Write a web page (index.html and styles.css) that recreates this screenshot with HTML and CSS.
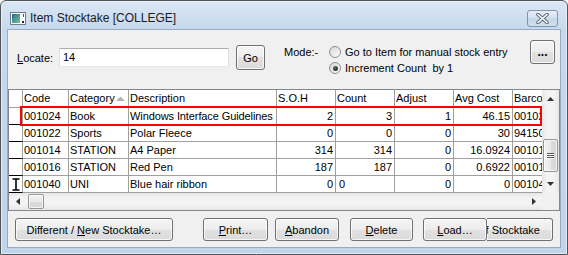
FILE: index.html
```html
<!DOCTYPE html>
<html lang="en">
<head>
    <meta charset="UTF-8">
    <title>Item Stocktake</title>
    <link rel="stylesheet" href="styles.css">
</head>
<body>
<div class="window">
    <div class="titlebar">
        <svg class="app-icon" width="16" height="13" viewBox="0 0 16 13">
            <defs>
                <linearGradient id="ig" x1="0" y1="0" x2="1" y2="1">
                    <stop offset="0" stop-color="#2a6f8c"/>
                    <stop offset="1" stop-color="#79c39a"/>
                </linearGradient>
            </defs>
            <rect x="0.5" y="0.5" width="15" height="12" fill="#fafafa" stroke="#6f7f90"/>
            <rect x="2" y="2" width="8" height="9" fill="url(#ig)"/>
            <rect x="12" y="9" width="2" height="2" fill="#222"/>
            <rect x="13" y="2" width="1" height="3" fill="#555"/>
        </svg>
        <span class="title">Item Stocktake [COLLEGE]</span>
        <div class="close-btn">
            <svg width="13" height="11" viewBox="0 0 13 11">
                <path d="M2 1.5L11 9.5M11 1.5L2 9.5" stroke="#5b6b80" stroke-width="3.6" stroke-linecap="round"/>
                <path d="M2 1.5L11 9.5M11 1.5L2 9.5" stroke="#fff" stroke-width="1.6" stroke-linecap="round"/>
            </svg>
        </div>
    </div>

    <div class="client">
        <div class="top">
            <div class="locate">
                <label><u>L</u>ocate:</label>
                <div class="textbox">14</div>
                <button class="btn go">Go</button>
            </div>
            <div class="mode">
                <span class="mode-label">Mode:-</span>
                <div class="options">
                    <div class="opt"><span class="radio"></span>Go to Item for manual stock entry</div>
                    <div class="opt"><span class="radio checked"></span>Increment Count&nbsp; by 1</div>
                </div>
            </div>
            <button class="btn more">...</button>
        </div>

        <div class="grid">
            <div class="grid-view">
                <table>
                    <colgroup>
                        <col class="c-ind"><col class="c-code"><col class="c-cat"><col class="c-desc">
                        <col class="c-num"><col class="c-num"><col class="c-num"><col class="c-num"><col class="c-bar">
                    </colgroup>
                    <thead>
                        <tr>
                            <th class="ind"></th>
                            <th>Code</th>
                            <th>Category<svg class="sort" width="9" height="5" viewBox="0 0 9 5"><path d="M0 5L4.5 0.5L9 5Z" fill="#b3b3b3"/></svg></th>
                            <th>Description</th>
                            <th>S.O.H</th>
                            <th>Count</th>
                            <th>Adjust</th>
                            <th>Avg Cost</th>
                            <th>Barcode</th>
                        </tr>
                    </thead>
                    <tbody>
                        <tr>
                            <td class="ind"></td>
                            <td>001024</td><td>Book</td><td class="desc">Windows Interface Guidelines</td>
                            <td class="num">2</td><td class="num">3</td><td class="num">1</td><td class="num">46.15</td><td>001024</td>
                        </tr>
                        <tr>
                            <td class="ind"></td>
                            <td>001022</td><td>Sports</td><td>Polar Fleece</td>
                            <td class="num">0</td><td class="num">0</td><td class="num">0</td><td class="num">30</td><td>9415007000123</td>
                        </tr>
                        <tr>
                            <td class="ind"></td>
                            <td>001014</td><td>STATION</td><td>A4 Paper</td>
                            <td class="num">314</td><td class="num">314</td><td class="num">0</td><td class="num">16.0924</td><td>001014</td>
                        </tr>
                        <tr>
                            <td class="ind"></td>
                            <td>001016</td><td>STATION</td><td>Red Pen</td>
                            <td class="num">187</td><td class="num">187</td><td class="num">0</td><td class="num">0.6922</td><td>001016</td>
                        </tr>
                        <tr>
                            <td class="ind edit-mark">
                                <svg width="8" height="13" viewBox="0 0 8 13"><path d="M0.5 1H7.5M4 1V12M0.5 12H7.5" stroke="#000" stroke-width="1.6"/></svg>
                            </td>
                            <td>001040</td><td>UNI</td><td>Blue hair ribbon</td>
                            <td class="num">0</td><td class="editing">0</td><td class="num">0</td><td class="num">0</td><td>001040</td>
                        </tr>
                    </tbody>
                </table>
                <div class="current-row"></div>
            </div>

            <div class="vscroll">
                <div class="arrow"><svg width="7" height="4" viewBox="0 0 7 4"><path d="M0 4L3.5 0L7 4Z" fill="#333"/></svg></div>
                <div class="vthumb"><span></span><span></span><span></span></div>
                <div class="arrow down"><svg width="7" height="4" viewBox="0 0 7 4"><path d="M0 0L3.5 4L7 0Z" fill="#333"/></svg></div>
            </div>
            <div class="hscroll">
                <div class="arrow"><svg width="4" height="7" viewBox="0 0 4 7"><path d="M4 0L0 3.5L4 7Z" fill="#333"/></svg></div>
                <div class="hthumb"></div>
                <div class="arrow right"><svg width="4" height="7" viewBox="0 0 4 7"><path d="M0 0L4 3.5L0 7Z" fill="#333"/></svg></div>
            </div>
            <div class="corner"></div>
        </div>

        <div class="actions">
            <button class="btn b-new">Different / <u>N</u>ew Stocktake…</button>
            <button class="btn b-print"><u>P</u>rint…</button>
            <button class="btn b-abandon"><u>A</u>bandon</button>
            <button class="btn b-delete"><u>D</u>elete</button>
            <button class="btn b-load"><u>L</u>oad…</button>
            <button class="btn b-finish"><span>of Stocktake</span></button>
        </div>
    </div>
</div>
</body>
</html>
```

FILE: styles.css
```css
* {
    box-sizing: border-box;
}
body {
    margin: 0;
    font-family: "Liberation Sans", Arial, sans-serif;
    font-size: 11px;
    color: #000;
    background: #fff;
}
.window {
    width: 568px;
    height: 255px;
    border: 1px solid #4f5459;
    border-radius: 6px 6px 0 0;
    background: linear-gradient(#dae6f4, #c6d8ed 30px, #c2d4ea);
    box-shadow: inset 0 0 0 1px rgba(255, 255, 255, 0.5);
}

/* title bar */
.titlebar {
    height: 29px;
    padding: 5px 0 0 9px;
    display: flex;
    align-items: center;
}
.app-icon {
    margin-right: 4px;
}
.title {
    font-size: 12px;
    color: #1b1b1b;
}
.close-btn {
    margin-left: auto;
    margin-right: 9px;
    width: 31px;
    height: 17px;
    border: 1px solid #8395ac;
    border-radius: 3px;
    background: linear-gradient(#e6eef8, #d3e0ee 50%, #c7d6e8 50%, #d0deee);
    display: flex;
    align-items: center;
    justify-content: center;
}

/* client area */
.client {
    margin: 0 7px;
    height: 217px;
    background: #f0f0f0;
    box-shadow: 0 0 0 1px #9aabc0;
}
.top {
    display: flex;
    align-items: flex-start;
    height: 59px;
}
.locate {
    display: flex;
    align-items: center;
    height: 25px;
    margin: 15px 0 0 9px;
}
.locate label {
    width: 42px;
}
.textbox {
    width: 170px;
    height: 19px;
    padding: 2px 3px;
    line-height: 13px;
    background: #fff;
    border: 1px solid;
    border-color: #abadb3 #dbdfe6 #e3e9ef #e2e3ea;
}
.btn {
    height: 23px;
    padding: 0;
    font: inherit;
    color: #000;
    border: 1px solid #707070;
    border-radius: 3px;
    background: linear-gradient(#f5f5f5, #ececec 50%, #e1e1e1 50%, #dbdbdb);
    box-shadow: inset 0 0 0 1px rgba(255, 255, 255, 0.75);
}
.go {
    margin-left: 7px;
    width: 29px;
    height: 25px;
}
.mode {
    display: flex;
    margin: 14px 0 0 19px;
    line-height: 16px;
}
.mode-label {
    width: 45px;
}
.opt {
    display: flex;
    align-items: center;
    height: 16px;
}
.radio {
    width: 12px;
    height: 12px;
    margin-right: 4px;
    border-radius: 50%;
    border: 1px solid #8e8f8f;
    background: linear-gradient(135deg, #d6d6d6, #fdfdfd);
    display: flex;
    align-items: center;
    justify-content: center;
}
.radio.checked::after {
    content: "";
    width: 5px;
    height: 5px;
    border-radius: 50%;
    background: radial-gradient(circle at 35% 35%, #666, #111);
}
.more {
    margin: 10px 5px 0 auto;
    width: 25px;
    height: 24px;
    font-weight: bold;
    font-size: 12px;
}

/* grid */
.grid {
    display: grid;
    grid-template-columns: 533px 17px;
    grid-template-rows: 103px 17px;
    border: 1px solid #828790;
    background: #fff;
}
.grid-view {
    position: relative;
    overflow: hidden;
}
table {
    border-collapse: separate;
    border-spacing: 0;
    table-layout: fixed;
    width: 584px;
}
.c-ind { width: 14px; }
.c-code { width: 46px; }
.c-cat { width: 60px; }
.c-desc { width: 148px; }
.c-num { width: 59px; }
.c-bar { width: 80px; }
th, td {
    padding: 0 0 0 1px;
    border-right: 1px solid #a0a0a0;
    border-bottom: 1px solid #a0a0a0;
    white-space: nowrap;
    overflow: hidden;
    font-weight: normal;
    text-align: left;
    line-height: 16px;
}
th {
    line-height: 17px;
}
td.desc {
    letter-spacing: -0.1px;
}
td.num {
    text-align: right;
    padding: 0 2px 0 0;
}
td.editing {
    padding-left: 3px;
}
td.ind {
    border-bottom-color: #000;
}
.edit-mark svg {
    display: block;
    margin: 1px 0 0 2px;
}
.sort {
    margin-left: 1px;
    vertical-align: 1px;
}
.current-row {
    position: absolute;
    left: 11px;
    top: 16px;
    width: 522px;
    height: 20px;
    border: 2px solid #ff0000;
}

/* scrollbars */
.vscroll {
    display: flex;
    flex-direction: column;
    background: linear-gradient(90deg, #e6e6e6, #f3f3f3 30%, #f3f3f3 70%, #e6e6e6);
}
.hscroll {
    display: flex;
    align-items: center;
    background: linear-gradient(#e6e6e6, #f3f3f3 30%, #f3f3f3 70%, #e6e6e6);
}
.corner {
    background: #f0f0f0;
}
.arrow {
    width: 17px;
    height: 17px;
    flex: none;
    display: flex;
    align-items: center;
    justify-content: center;
}
.vscroll .down {
    margin-top: 3px;
    height: 18px;
}
.hscroll .right {
    margin-left: auto;
}
.vthumb {
    margin: 32px 0 0 1px;
    width: 15px;
    height: 33px;
    border: 1px solid #979797;
    border-radius: 2px;
    background: linear-gradient(90deg, #f4f4f4, #e9e9e9 50%, #dcdcdc 50%, #d6d6d6);
    box-shadow: inset 0 0 0 1px rgba(255, 255, 255, 0.7);
    display: flex;
    flex-direction: column;
    align-items: center;
    justify-content: center;
    gap: 1px;
}
.vthumb span {
    width: 7px;
    height: 1px;
    background: #555;
    box-shadow: 0 1px 0 #fff;
}
.hthumb {
    margin-left: 2px;
    width: 16px;
    height: 15px;
    border: 1px solid #979797;
    border-radius: 2px;
    background: linear-gradient(#f4f4f4, #e9e9e9 50%, #dcdcdc 50%, #d6d6d6);
    box-shadow: inset 0 0 0 1px rgba(255, 255, 255, 0.7);
}

/* buttons */
.actions {
    display: flex;
    margin: 7px 0 0 7px;
}
.b-new { width: 158px; }
.b-print { width: 65px; margin-left: 30px; }
.b-abandon { width: 64px; margin-left: 7px; }
.b-delete { width: 63px; margin-left: 11px; }
.b-load { width: 64px; margin-left: 10px; }
.b-finish {
    width: 66px;
    border-left: none;
    border-radius: 0 3px 3px 0;
    display: flex;
    align-items: center;
    justify-content: flex-end;
    padding-right: 12px;
    overflow: hidden;
    white-space: nowrap;
}
.b-finish span {
    flex: none;
}
```
